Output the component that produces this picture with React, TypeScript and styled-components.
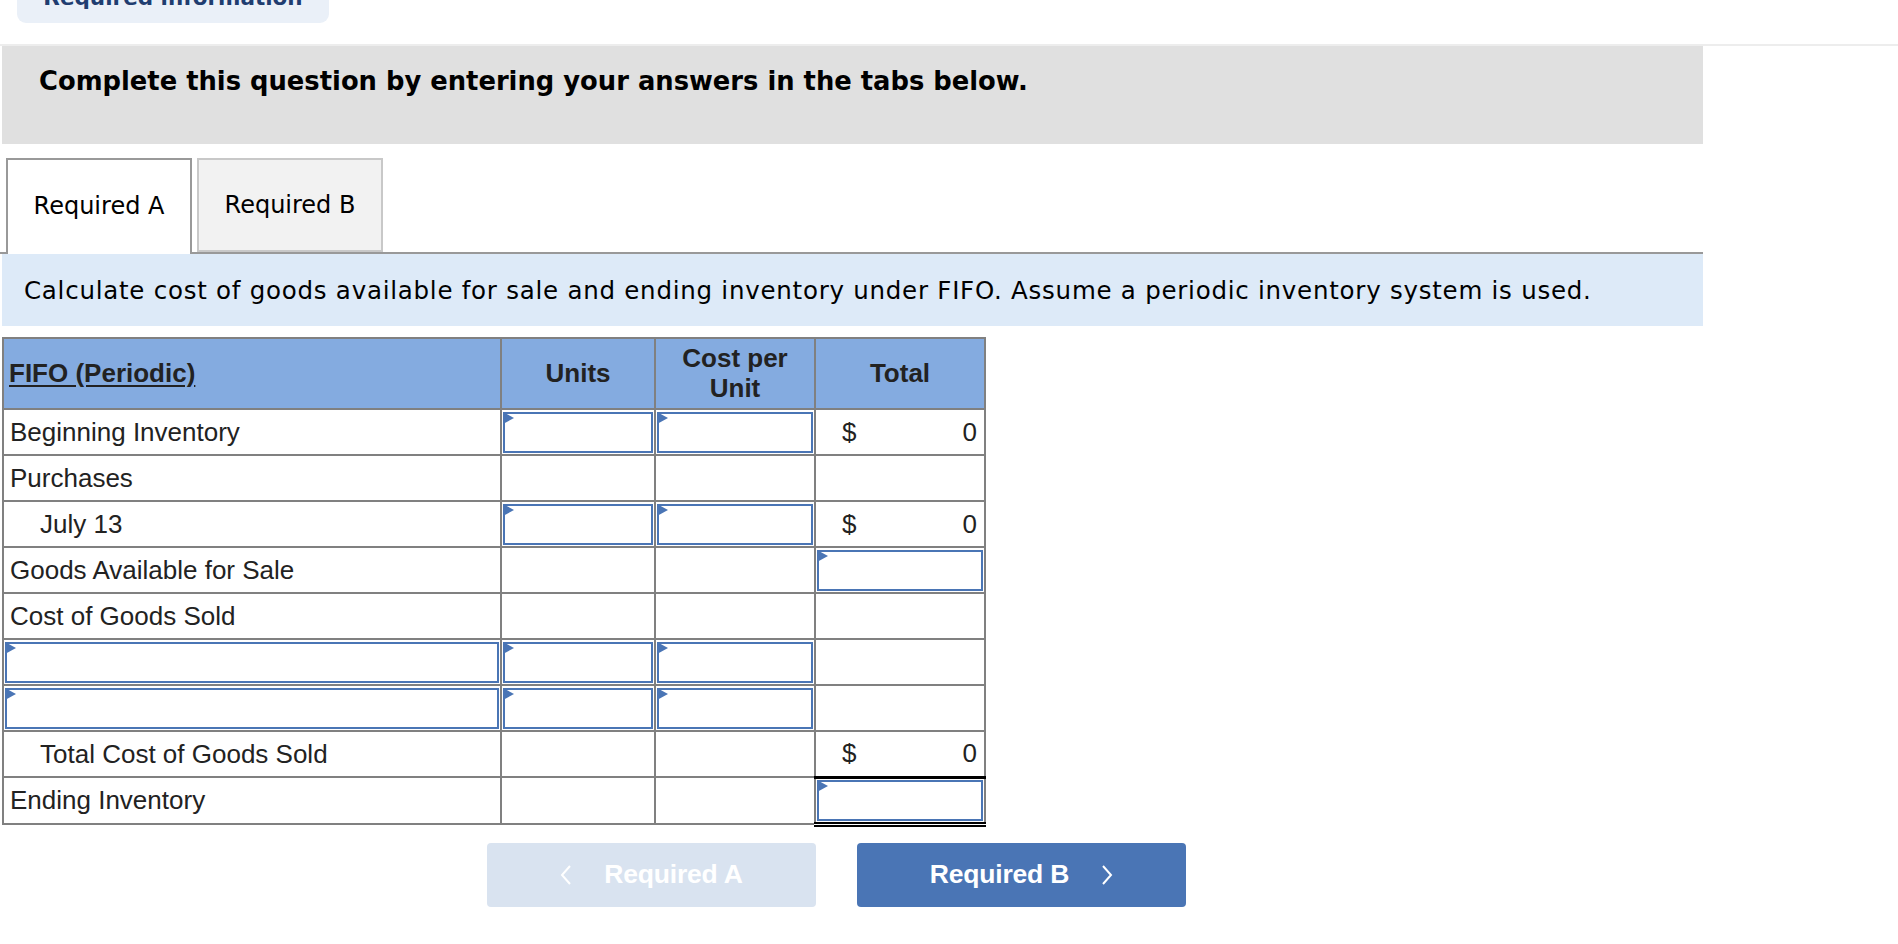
import React from "react";
import styled, { createGlobalStyle } from "styled-components";

const GlobalStyle = createGlobalStyle`
  html, body {
    margin: 0;
    padding: 0;
    background: #ffffff;
  }
  body {
    font-family: "DejaVu Sans", Verdana, sans-serif;
    color: #000;
  }
  * {
    box-sizing: border-box;
  }
`;

type Row = {
  label: string;
  indent?: boolean;
  labelInput?: boolean;
  units?: boolean;
  cost?: boolean;
  total?: "value" | "input" | "none";
  totalRule?: "single" | "double";
};

const rows: Array<Row> = [
  { label: "Beginning Inventory", units: true, cost: true, total: "value" },
  { label: "Purchases", total: "none" },
  { label: "July 13", indent: true, units: true, cost: true, total: "value" },
  { label: "Goods Available for Sale", total: "input" },
  { label: "Cost of Goods Sold", total: "none" },
  { label: "", labelInput: true, units: true, cost: true, total: "none" },
  { label: "", labelInput: true, units: true, cost: true, total: "none" },
  { label: "Total Cost of Goods Sold", indent: true, total: "value", totalRule: "single" },
  { label: "Ending Inventory", total: "input", totalRule: "double" },
];

const Entry: React.FunctionComponent = () => (
  <EntryBox>
    <EntryField type="text" />
    <Flag />
  </EntryBox>
);

const ChevronLeft = () => (
  <svg width="12" height="22" viewBox="0 0 12 22" fill="none">
    <polyline points="10,2 2,11 10,20" stroke="#fff" strokeWidth="2" />
  </svg>
);

const ChevronRight = () => (
  <svg width="12" height="22" viewBox="0 0 12 22" fill="none">
    <polyline points="2,2 10,11 2,20" stroke="#fff" strokeWidth="2" />
  </svg>
);

export default function App() {
  return (
    <>
      <GlobalStyle />
      <Page>
        <InfoPill>
          <PillText>Required information</PillText>
        </InfoPill>
        <Divider />
        <Content>
          <Banner>Complete this question by entering your answers in the tabs below.</Banner>
          <TabBar>
            <Tab $active>Required A</Tab>
            <Tab>Required B</Tab>
          </TabBar>
          <Prompt>
            Calculate cost of goods available for sale and ending inventory under FIFO. Assume a periodic
            inventory system is used.
          </Prompt>

          <Sheet>
            <colgroup>
              <col style={{ width: 498 }} />
              <col style={{ width: 154 }} />
              <col style={{ width: 160 }} />
              <col style={{ width: 170 }} />
            </colgroup>
            <thead>
              <tr>
                <HeadCell $align="left">
                  <Underlined>FIFO (Periodic)</Underlined>
                </HeadCell>
                <HeadCell>Units</HeadCell>
                <HeadCell>
                  Cost per
                  <br />
                  Unit
                </HeadCell>
                <HeadCell>Total</HeadCell>
              </tr>
            </thead>
            <tbody>
              {rows.map((row, i) => (
                <tr key={i}>
                  {row.labelInput ? (
                    <InputCell>
                      <Entry />
                    </InputCell>
                  ) : (
                    <LabelCell $indent={row.indent}>{row.label}</LabelCell>
                  )}
                  {row.units ? (
                    <InputCell>
                      <Entry />
                    </InputCell>
                  ) : (
                    <PlainCell />
                  )}
                  {row.cost ? (
                    <InputCell>
                      <Entry />
                    </InputCell>
                  ) : (
                    <PlainCell />
                  )}
                  {row.total === "input" ? (
                    <InputCell $rule={row.totalRule}>
                      <Entry />
                    </InputCell>
                  ) : row.total === "value" ? (
                    <PlainCell $rule={row.totalRule}>
                      <Amount>
                        <span>$</span>
                        <span>0</span>
                      </Amount>
                    </PlainCell>
                  ) : (
                    <PlainCell $rule={row.totalRule} />
                  )}
                </tr>
              ))}
            </tbody>
          </Sheet>

          <NavRow>
            <NavButton $disabled>
              <ChevronLeft />
              <span>Required A</span>
            </NavButton>
            <NavButton>
              <span>Required B</span>
              <ChevronRight />
            </NavButton>
          </NavRow>
        </Content>
      </Page>
    </>
  );
}

const Page = styled.div`
  width: 1898px;
  min-height: 944px;
  overflow: hidden;
`;

const InfoPill = styled.div`
  margin-left: 17px;
  width: 312px;
  height: 23px;
  background: #eaf0f8;
  border-radius: 0 0 9px 9px;
  overflow: hidden;
  display: flex;
  align-items: flex-end;
  justify-content: center;
`;

const PillText = styled.span`
  font-family: "DejaVu Sans", Verdana, sans-serif;
  font-weight: bold;
  font-size: 21.5px;
  line-height: 1;
  color: #1f3d70;
  margin-bottom: 15px;
  white-space: nowrap;
`;

const Divider = styled.div`
  margin-top: 21px;
  height: 2px;
  background: #ededed;
`;

const Content = styled.div`
  padding-left: 2px;
`;

const Banner = styled.div`
  width: 1701px;
  height: 98px;
  background: #e0e0e0;
  padding: 20px 0 0 37px;
  font-weight: bold;
  font-size: 25.8px;
  color: #000;
`;

const TabBar = styled.div`
  margin-top: 14px;
  margin-left: -2px;
  width: 1703px;
  padding-left: 6px;
  display: flex;
  align-items: flex-end;
  gap: 5px;
  border-bottom: 2px solid #999999;
`;

const Tab = styled.div<{ $active?: boolean }>`
  width: 186px;
  height: ${({ $active }) => ($active ? "96px" : "94px")};
  margin-bottom: ${({ $active }) => ($active ? "-2px" : "0")};
  background: ${({ $active }) => ($active ? "#ffffff" : "#f2f2f2")};
  border: 2px solid ${({ $active }) => ($active ? "#999999" : "#c8c8c8")};
  border-bottom: ${({ $active }) => ($active ? "none" : "2px solid #c8c8c8")};
  display: flex;
  align-items: center;
  justify-content: center;
  padding-bottom: ${({ $active }) => ($active ? "2px" : "0")};
  font-size: 24px;
  color: #000;
`;

const Prompt = styled.div`
  width: 1701px;
  height: 72px;
  background: #ddeaf8;
  padding-left: 22px;
  display: flex;
  align-items: center;
  font-size: 24.5px;
  letter-spacing: 0.75px;
  color: #000;
  white-space: nowrap;
`;

const Sheet = styled.table`
  margin-top: 11px;
  width: 982px;
  border-collapse: collapse;
  table-layout: fixed;
  font-family: "Liberation Sans", Arial, sans-serif;
  font-size: 26px;
  color: #222;
`;

const HeadCell = styled.th<{ $align?: "left" | "center" }>`
  height: 71px;
  background: #84abe0;
  border: 2px solid #808080;
  text-align: ${({ $align }) => $align || "center"};
  padding: 0 5px;
  font-weight: bold;
  line-height: 1.15;
  color: #222;
`;

const Underlined = styled.span`
  text-decoration: underline;
  text-underline-offset: 3px;
`;

const LabelCell = styled.td<{ $indent?: boolean }>`
  height: 46px;
  border: 2px solid #808080;
  padding: 0 0 0 ${({ $indent }) => ($indent ? "36px" : "6px")};
  white-space: nowrap;
`;

const PlainCell = styled.td<{ $rule?: "single" | "double" }>`
  height: 46px;
  border: 2px solid #808080;
  border-bottom: ${({ $rule }) =>
    $rule === "single" ? "3px solid #000" : $rule === "double" ? "5px double #000" : "2px solid #808080"};
  padding: 0;
`;

const InputCell = styled(PlainCell)`
  padding: 1px;
`;

const Amount = styled.div`
  display: flex;
  justify-content: space-between;
  align-items: center;
  padding: 0 7px 0 26px;
`;

const EntryBox = styled.div`
  position: relative;
  height: 41px;
`;

const Flag = styled.span`
  position: absolute;
  z-index: 1;
  left: 0;
  top: 0;
  width: 0;
  height: 0;
  border-top: 6px solid transparent;
  border-bottom: 6px solid transparent;
  border-left: 11px solid #4a75b5;
`;

const EntryField = styled.input`
  display: block;
  width: 100%;
  height: 100%;
  border: 2px solid #4a75b5;
  background: #ffffff;
  outline: none;
  font-family: "Liberation Sans", Arial, sans-serif;
  font-size: 26px;
  padding: 0 6px;
`;

const NavRow = styled.div`
  margin-top: 16px;
  padding-left: 485px;
  display: flex;
  gap: 41px;
`;

const NavButton = styled.div<{ $disabled?: boolean }>`
  width: 329px;
  height: 64px;
  border-radius: 4px;
  background: ${({ $disabled }) => ($disabled ? "#d9e3f0" : "#4a75b5")};
  color: #ffffff;
  display: flex;
  align-items: center;
  justify-content: center;
  gap: 32px;
  font-family: "Liberation Sans", Arial, sans-serif;
  font-weight: bold;
  font-size: 26.5px;
  letter-spacing: -0.2px;
`;
